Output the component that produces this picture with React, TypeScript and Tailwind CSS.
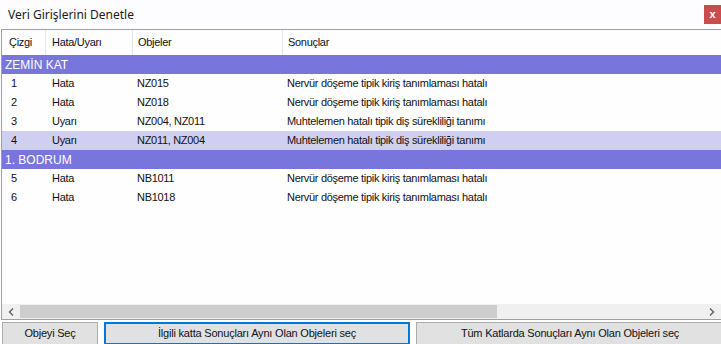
import React from 'react';

type Row =
  | { kind: 'group'; label: string }
  | { kind: 'item'; no: string; type: string; objs: string; result: string; selected?: boolean };

const rows: Row[] = [
  { kind: 'group', label: 'ZEMİN KAT' },
  { kind: 'item', no: '1', type: 'Hata', objs: 'NZ015', result: 'Nervür döşeme tipik kiriş tanımlaması hatalı' },
  { kind: 'item', no: '2', type: 'Hata', objs: 'NZ018', result: 'Nervür döşeme tipik kiriş tanımlaması hatalı' },
  { kind: 'item', no: '3', type: 'Uyarı', objs: 'NZ004, NZ011', result: 'Muhtelemen hatalı tipik diş sürekliliği tanımı' },
  { kind: 'item', no: '4', type: 'Uyarı', objs: 'NZ011, NZ004', result: 'Muhtelemen hatalı tipik diş sürekliliği tanımı', selected: true },
  { kind: 'group', label: '1. BODRUM' },
  { kind: 'item', no: '5', type: 'Hata', objs: 'NB1011', result: 'Nervür döşeme tipik kiriş tanımlaması hatalı' },
  { kind: 'item', no: '6', type: 'Hata', objs: 'NB1018', result: 'Nervür döşeme tipik kiriş tanımlaması hatalı' },
];

const cols = 'grid grid-cols-[44px_87px_150px_1fr]';

export default function App() {
  return (
    <div className="w-[721px] h-[344px] overflow-hidden bg-white text-[#111] text-[11px] tracking-[-0.3px] font-['Liberation_Sans',Arial,sans-serif] flex flex-col">
      {/* title bar */}
      <div className="h-[29px] shrink-0 flex justify-between bg-[#fdfcff] tracking-normal">
        <div className="pl-2 pt-[6px] text-[12px] text-[#1a1a1a] font-['Noto_Sans',sans-serif]">Veri Girişlerini Denetle</div>
        <div className="mt-[5px] w-[17px] h-[19px] bg-[#c94c4e] text-white font-bold text-[11px] leading-[18px] text-center">x</div>
      </div>

      {/* list */}
      <div className="ml-px h-[291px] shrink-0 border-l border-t border-b border-[#a0a0a0] flex flex-col bg-[#fefeff]">
        <div className={`${cols} h-[25px] shrink-0`}>
          <div className="pl-[7px] flex items-center border-r border-[#e5e5e5]">Çizgi</div>
          <div className="pl-[6px] flex items-center border-r border-[#e5e5e5]">Hata/Uyarı</div>
          <div className="pl-[5px] flex items-center border-r border-[#e5e5e5]">Objeler</div>
          <div className="pl-[5px] flex items-center">Sonuçlar</div>
        </div>

        {rows.map((r, i) =>
          r.kind === 'group' ? (
            <div key={i} className="h-[19px] shrink-0 bg-[#7876dc] text-white text-[12px] tracking-normal pl-[3px] flex items-center">
              {r.label}
            </div>
          ) : (
            <div key={i} className={`${cols} h-[19px] shrink-0 items-center ${r.selected ? 'bg-[#cfcff2]' : ''}`}>
              <div className="pl-[9px]">{r.no}</div>
              <div className="pl-[6px]">{r.type}</div>
              <div className="pl-[4px]">{r.objs}</div>
              <div className="pl-[4px]">{r.result}</div>
            </div>
          )
        )}

        <div className="flex-1" />

        {/* horizontal scrollbar */}
        <div className="h-[15px] shrink-0 flex bg-[#f0f0f0]">
          <div className="w-[18px] flex items-center justify-center">
            <svg width="6" height="8" viewBox="0 0 6 8"><path d="M5 0.5 L1.5 4 L5 7.5" fill="none" stroke="#606060" strokeWidth="1.4" /></svg>
          </div>
          <div className="w-[477px] my-[1px] bg-[#cdcdcd]" />
          <div className="flex-1" />
          <div className="w-[18px] flex items-center justify-center">
            <svg width="6" height="8" viewBox="0 0 6 8"><path d="M1 0.5 L4.5 4 L1 7.5" fill="none" stroke="#606060" strokeWidth="1.4" /></svg>
          </div>
        </div>
      </div>

      {/* buttons */}
      <div className="mt-[2px] flex gap-[6px] pl-[2px] text-[11px] tracking-[-0.2px]">
        <button className="w-[96px] h-[23px] shrink-0 bg-[#e1e1e1] border border-[#adadad] text-[#111]">Objeyi Seç</button>
        <button className="w-[306px] h-[23px] shrink-0 bg-[#e1e1e1] border-2 border-[#0078d7] text-[#111]">İlgili katta Sonuçları Aynı Olan Objeleri seç</button>
        <button className="w-[308px] h-[23px] shrink-0 bg-[#e1e1e1] border border-[#adadad] text-[#111]">Tüm Katlarda Sonuçları Aynı Olan Objeleri seç</button>
      </div>
    </div>
  );
}
